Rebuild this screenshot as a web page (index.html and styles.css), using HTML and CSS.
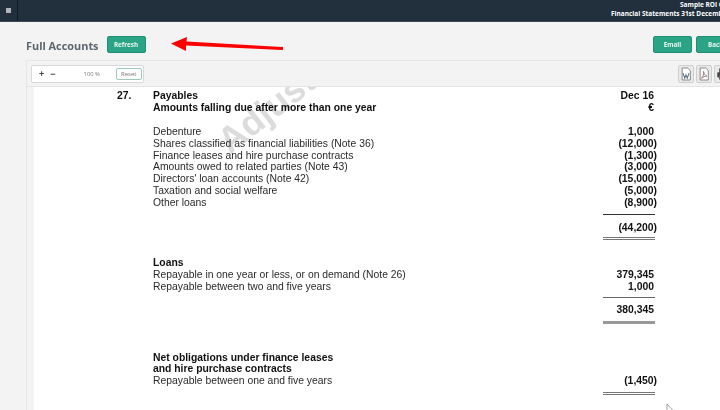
FILE: index.html
```html
<!DOCTYPE html>
<html lang="en">
<head>
<meta charset="utf-8">
<title>Full Accounts</title>
<link rel="stylesheet" href="styles.css">
</head>
<body>
<div class="screen">
<header class="topbar">
  <div class="brand"><span class="brand-icon"></span></div>
  <div class="doc-title">
    <div>Sample ROI Company Limited</div>
    <div>Financial Statements 31st December 2016</div>
  </div>
</header>
<main class="content">
  <div class="heading">
    <div class="heading-left">
      <h1>Full Accounts</h1>
      <button class="btn btn-refresh">Refresh</button>
    </div>
    <div class="heading-right">
      <button class="btn btn-email">Email</button>
      <button class="btn btn-back">Back</button>
    </div>
  </div>
  <section class="viewer">
    <div class="toolbar">
      <div class="zoombox">
        <span class="zoom-sign">+</span>
        <span class="zoom-sign minus">−</span>
        <span class="zoom-val">100 %</span>
        <button class="reset">Reset</button>
      </div>
      <div class="exports">
        <span class="export"><svg viewBox="0 0 14 16" class="export-icon"><path d="M2.500 1h6.500l3 3v11h-9.500z" fill="#fff" stroke="#777"/><path d="M3.500 7l2 6 1.500-4 1.500 4 2-6" fill="none" stroke="#5d7186" stroke-width="1.200"/></svg></span>
        <span class="export"><svg viewBox="0 0 14 16" class="export-icon"><path d="M2.500 1h6.500l3 3v11h-9.500z" fill="#fff" stroke="#777"/><path d="M4 13c2-2 3-5 2.500-8 .5 3 2 5 4 5.500-2.500 0-4.500 1-6.500 2.500z" fill="none" stroke="#8a6a6a"/></svg></span>
        <span class="export"><svg viewBox="0 0 14 16" class="export-icon"><rect x="4" y="2" width="7" height="4" fill="#fff" stroke="#555"/><rect x="1.500" y="6" width="12" height="6" rx="1" fill="#444"/><rect x="4" y="10" width="7" height="4" fill="#fff" stroke="#555"/></svg></span>
      </div>
    </div>
    <article class="page">
      <div class="watermark">Adjusted</div>
      <div class="row head"><span class="num">27.</span><span class="label">Payables</span><span class="val plain">Dec 16</span></div>
      <div class="row head"><span class="num"></span><span class="label">Amounts falling due after more than one year</span><span class="val plain">€</span></div>
      <div class="row blank"></div>
      <div class="row"><span class="num"></span><span class="label">Debenture</span><span class="val plain">1,000</span></div>
      <div class="row"><span class="num"></span><span class="label">Shares classified as financial liabilities (Note 36)</span><span class="val">(12,000)</span></div>
      <div class="row"><span class="num"></span><span class="label">Finance leases and hire purchase contracts</span><span class="val">(1,300)</span></div>
      <div class="row"><span class="num"></span><span class="label">Amounts owed to related parties (Note 43)</span><span class="val">(3,000)</span></div>
      <div class="row"><span class="num"></span><span class="label">Directors' loan accounts (Note 42)</span><span class="val">(15,000)</span></div>
      <div class="row"><span class="num"></span><span class="label">Taxation and social welfare</span><span class="val">(5,000)</span></div>
      <div class="row"><span class="num"></span><span class="label">Other loans</span><span class="val">(8,900)</span></div>
      <div class="rule single"></div>
      <div class="row total"><span class="num"></span><span class="label"></span><span class="val">(44,200)</span></div>
      <div class="rule double d1"></div>
      <div class="row head section"><span class="num"></span><span class="label">Loans</span></div>
      <div class="row"><span class="num"></span><span class="label">Repayable in one year or less, or on demand (Note 26)</span><span class="val plain">379,345</span></div>
      <div class="row"><span class="num"></span><span class="label">Repayable between two and five years</span><span class="val plain">1,000</span></div>
      <div class="rule single s2"></div>
      <div class="row total t2"><span class="num"></span><span class="label"></span><span class="val plain">380,345</span></div>
      <div class="rule double d2"></div>
      <div class="row head section wide"><span class="num"></span><span class="label">Net obligations under finance leases</span></div>
      <div class="row head"><span class="num"></span><span class="label">and hire purchase contracts</span></div>
      <div class="row"><span class="num"></span><span class="label">Repayable between one and five years</span><span class="val">(1,450)</span></div>
      <div class="rule double d3"></div>
    </article>
  </section>
</main>
<svg class="arrow" viewBox="0 0 120 20" width="120" height="20"><path d="M0 6.500 L16 0 L15.500 4.500 L112 10 L112 13 L15 8.500 L15 14z" fill="#f00"/></svg>
<svg class="cursor" viewBox="0 0 8 12" width="8" height="12"><path d="M1 1v9l2-2 1.500 3 1.500-.7-1.500-2.800h2.500z" fill="#fff" stroke="#888" stroke-width=".8"/></svg>
</div>
</body>
</html>
```
FILE: styles.css
```css
* { box-sizing: border-box; }
html, body { margin: 0; height: 410px; overflow: hidden; }
body { background: #f3f3f4; font-family: "Open Sans", "Liberation Sans", sans-serif; width: 720px; }
.screen { position: relative; width: 720px; height: 410px; overflow: hidden; filter: blur(.3px); }

.topbar { height: 22px; background: #22303d; border-bottom: 1px solid #3c4a56; display: flex; justify-content: space-between; overflow: hidden; }
.brand { width: 18px; border-right: 1px solid #101820; display: flex; align-items: center; justify-content: center; }
.brand-icon { width: 5px; height: 5px; background: #aeb6bd; }
.doc-title { flex: none; width: 216px; margin-right: -107px; color: #fff; font-size: 6.500px; font-weight: 700; line-height: 8.500px; padding-top: 1px; white-space: nowrap; }
.doc-title div:first-child { padding-left: 69px; }
.doc-title div { height: 8.500px; }

.content { padding: 0 0 0 26px; }
.heading { height: 38px; padding-top: 14px; display: flex; justify-content: space-between; }
.heading-left { display: flex; align-items: flex-start; gap: 8px; }
h1 { margin: 0; padding-top: 2px; font-size: 10.900px; line-height: 15px; font-weight: 700; color: #5b6670; }
.heading-right { display: flex; gap: 4px; margin-right: -15px; }
.btn { width: 39px; height: 17px; padding: 0; border: 1px solid #1f8f75; border-radius: 2px; background: #2ba385; color: #e9f7f3; font: 700 6.300px "Open Sans", sans-serif; }

.viewer { border: 1px solid #e6e6e6; border-right: 0; border-bottom: 0; }
.toolbar { height: 26px; padding: 4px 0 0 4px; display: flex; justify-content: space-between; border-bottom: 1px solid #e4e4e4; }
.zoombox { width: 113px; height: 18px; background: #fff; border: 1px solid #d8d8d8; border-radius: 2px; display: flex; align-items: center; padding: 0 1px 0 7px; color: #555; }
.zoom-sign { font: 700 9px "Liberation Sans", sans-serif; width: 12px; color: #444; }
.zoom-val { font-size: 5.800px; color: #777; margin-left: 22px; width: 34px; }
.reset { width: 28px; height: 12px; padding: 0; background: #fff; border: 1px solid #9cc9bc; border-radius: 2px; font: 6px "Open Sans", sans-serif; color: #777; }
.exports { display: flex; gap: 2px; margin-right: -10px; }
.export { width: 16px; height: 18px; background: #e9e9e9; border: 1px solid #cfcfcf; border-radius: 2px; display: flex; align-items: center; justify-content: center; }
.export-icon { width: 12px; height: 14px; display: block; }

.page { position: relative; margin-left: 7px; height: 324px; background: #fff; padding-top: 3px; font-family: "Liberation Sans", Arial, sans-serif; font-size: 10.360px; color: #2a2a2a; overflow: hidden; }
.row { position: relative; display: flex; height: 11.800px; line-height: 11.800px; white-space: nowrap; }
.blank { height: 12.500px; }
.num { width: 119px; padding-left: 83px; font-weight: 700; flex: none; color: #111; }
.label { width: 400px; flex: none; }
.val { width: 100px; flex: none; margin-left: 4px; text-align: right; font-weight: 700; color: #111; }
.val.plain { padding-right: 3px; }
.head .label { font-weight: 700; color: #111; }

.rule { margin-left: 569px; width: 52px; }
.single { height: 1px; background: #333; margin-top: 5px; }
.s2 { height: 1.500px; background: #666; margin-top: 4px; }
.total { margin-top: 7px; }
.t2 { margin-top: 6px; }
.double { height: 3px; border-top: 1px solid #777; border-bottom: 1px solid #777; }
.d1 { margin-top: 4px; }
.d2 { margin-top: 5px; background: #999; border-color: #999; }
.d3 { margin-top: 4.500px; }
.section { margin-top: 17px; }
.section.wide { margin-top: 27.500px; }

.watermark { position: absolute; left: 172px; top: -10px; transform: rotate(-38deg); font-size: 36px; font-weight: 700; color: #dcdcdc; white-space: nowrap; }

.arrow { position: absolute; left: 171px; top: 37px; }
.cursor { position: absolute; left: 666px; top: 403px; }
```
